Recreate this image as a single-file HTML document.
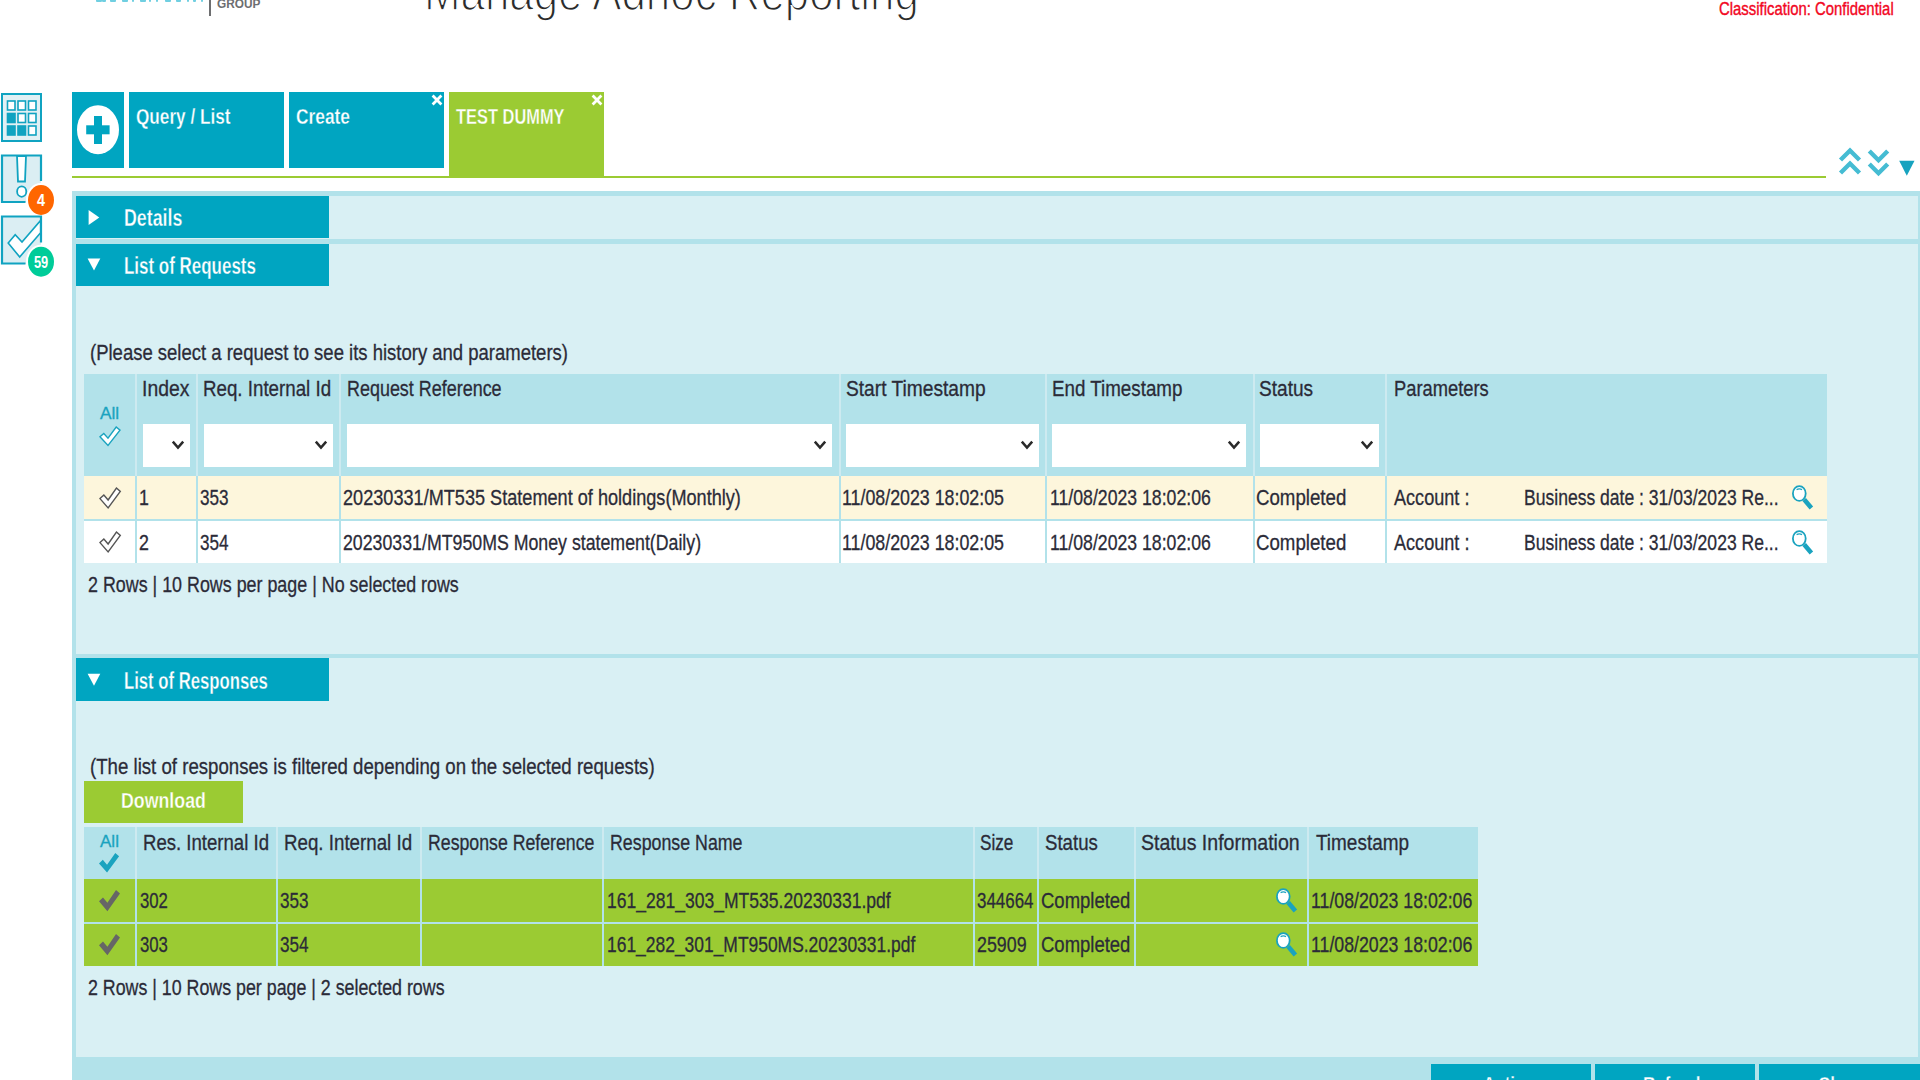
<!DOCTYPE html>
<html><head><meta charset="utf-8"><style>
html,body{margin:0;padding:0;width:1920px;height:1080px;overflow:hidden;background:#fff;position:relative}
body>div,body>svg{position:absolute}
.t{font-family:"Liberation Sans",sans-serif;line-height:1;white-space:pre;transform-origin:0 0}
</style></head><body>
<div style="left:96px;top:0px;width:6px;height:2px;background:#4cc3d9;opacity:0.8;border-radius:0 0 1px 1px"></div>
<div style="left:102px;top:0px;width:4px;height:2px;background:#4cc3d9;opacity:0.8;border-radius:0 0 1px 1px"></div>
<div style="left:110px;top:0px;width:6px;height:2px;background:#4cc3d9;opacity:0.8;border-radius:0 0 1px 1px"></div>
<div style="left:122px;top:0px;width:6px;height:2px;background:#4cc3d9;opacity:0.8;border-radius:0 0 1px 1px"></div>
<div style="left:132px;top:0px;width:2px;height:2px;background:#4cc3d9;opacity:0.8;border-radius:0 0 1px 1px"></div>
<div style="left:140px;top:0px;width:6px;height:2px;background:#4cc3d9;opacity:0.8;border-radius:0 0 1px 1px"></div>
<div style="left:149px;top:0px;width:2px;height:2px;background:#4cc3d9;opacity:0.8;border-radius:0 0 1px 1px"></div>
<div style="left:156px;top:0px;width:2px;height:2px;background:#4cc3d9;opacity:0.8;border-radius:0 0 1px 1px"></div>
<div style="left:165px;top:0px;width:6px;height:2px;background:#4cc3d9;opacity:0.8;border-radius:0 0 1px 1px"></div>
<div style="left:176px;top:0px;width:5px;height:2px;background:#4cc3d9;opacity:0.8;border-radius:0 0 1px 1px"></div>
<div style="left:187px;top:0px;width:2px;height:2px;background:#4cc3d9;opacity:0.8;border-radius:0 0 1px 1px"></div>
<div style="left:193px;top:0px;width:3px;height:2px;background:#4cc3d9;opacity:0.8;border-radius:0 0 1px 1px"></div>
<div style="left:201px;top:0px;width:2px;height:2px;background:#4cc3d9;opacity:0.8;border-radius:0 0 1px 1px"></div>
<div style="left:209px;top:0px;width:2px;height:16px;background:#6d6e70;"></div>
<div style="left:72px;top:92px;width:52px;height:76px;background:#00a5c1;"></div>
<div style="left:129px;top:92px;width:155px;height:76px;background:#00a5c1;"></div>
<div style="left:289px;top:92px;width:155px;height:76px;background:#00a5c1;"></div>
<div style="left:449px;top:92px;width:155px;height:85px;background:#9bcb33;"></div>
<div style="left:72px;top:176px;width:1754px;height:2px;background:#9bcb33;"></div>
<div style="left:72px;top:191px;width:1848px;height:889px;background:#b2e2ea;"></div>
<div style="left:76px;top:196px;width:1842px;height:861px;background:#d9f0f4;"></div>
<div style="left:76px;top:239px;width:1842px;height:5px;background:#b2e2ea;"></div>
<div style="left:76px;top:654px;width:1842px;height:4px;background:#b2e2ea;"></div>
<div style="left:76px;top:196px;width:253px;height:42px;background:#00a5c1;"></div>
<div style="left:76px;top:244px;width:253px;height:42px;background:#00a5c1;"></div>
<div style="left:76px;top:658px;width:253px;height:43px;background:#00a5c1;"></div>
<div style="left:84px;top:374px;width:1743px;height:102px;background:#b2e2ea;"></div>
<div style="left:135px;top:374px;width:2px;height:102px;background:#cdeaf0;"></div>
<div style="left:196px;top:374px;width:2px;height:102px;background:#cdeaf0;"></div>
<div style="left:339px;top:374px;width:2px;height:102px;background:#cdeaf0;"></div>
<div style="left:839px;top:374px;width:2px;height:102px;background:#cdeaf0;"></div>
<div style="left:1045px;top:374px;width:2px;height:102px;background:#cdeaf0;"></div>
<div style="left:1253px;top:374px;width:2px;height:102px;background:#cdeaf0;"></div>
<div style="left:1385px;top:374px;width:2px;height:102px;background:#cdeaf0;"></div>
<div style="left:84px;top:476px;width:1743px;height:43px;background:#fdf6dc;"></div>
<div style="left:84px;top:519px;width:1743px;height:2px;background:#b2e2ea;"></div>
<div style="left:84px;top:521px;width:1743px;height:42px;background:#ffffff;"></div>
<div style="left:135px;top:476px;width:2px;height:87px;background:#b2e2ea;"></div>
<div style="left:196px;top:476px;width:2px;height:87px;background:#b2e2ea;"></div>
<div style="left:339px;top:476px;width:2px;height:87px;background:#b2e2ea;"></div>
<div style="left:839px;top:476px;width:2px;height:87px;background:#b2e2ea;"></div>
<div style="left:1045px;top:476px;width:2px;height:87px;background:#b2e2ea;"></div>
<div style="left:1253px;top:476px;width:2px;height:87px;background:#b2e2ea;"></div>
<div style="left:1385px;top:476px;width:2px;height:87px;background:#b2e2ea;"></div>
<div style="left:143px;top:424px;width:47px;height:43px;background:#fff;"></div>
<div style="left:204px;top:424px;width:129px;height:43px;background:#fff;"></div>
<div style="left:347px;top:424px;width:485px;height:43px;background:#fff;"></div>
<div style="left:846px;top:424px;width:193px;height:43px;background:#fff;"></div>
<div style="left:1052px;top:424px;width:194px;height:43px;background:#fff;"></div>
<div style="left:1260px;top:424px;width:119px;height:43px;background:#fff;"></div>
<div style="left:84px;top:781px;width:159px;height:42px;background:#9bcb33;"></div>
<div style="left:84px;top:827px;width:1394px;height:52px;background:#b2e2ea;"></div>
<div style="left:135px;top:827px;width:2px;height:52px;background:#cdeaf0;"></div>
<div style="left:276px;top:827px;width:2px;height:52px;background:#cdeaf0;"></div>
<div style="left:420px;top:827px;width:2px;height:52px;background:#cdeaf0;"></div>
<div style="left:602px;top:827px;width:2px;height:52px;background:#cdeaf0;"></div>
<div style="left:973px;top:827px;width:2px;height:52px;background:#cdeaf0;"></div>
<div style="left:1037px;top:827px;width:2px;height:52px;background:#cdeaf0;"></div>
<div style="left:1134px;top:827px;width:2px;height:52px;background:#cdeaf0;"></div>
<div style="left:1307px;top:827px;width:2px;height:52px;background:#cdeaf0;"></div>
<div style="left:84px;top:879px;width:1394px;height:43px;background:#9bcb33;"></div>
<div style="left:84px;top:922px;width:1394px;height:2px;background:#b2e2ea;"></div>
<div style="left:84px;top:924px;width:1394px;height:42px;background:#9bcb33;"></div>
<div style="left:135px;top:879px;width:2px;height:87px;background:#b2e2ea;"></div>
<div style="left:276px;top:879px;width:2px;height:87px;background:#b2e2ea;"></div>
<div style="left:420px;top:879px;width:2px;height:87px;background:#b2e2ea;"></div>
<div style="left:602px;top:879px;width:2px;height:87px;background:#b2e2ea;"></div>
<div style="left:973px;top:879px;width:2px;height:87px;background:#b2e2ea;"></div>
<div style="left:1037px;top:879px;width:2px;height:87px;background:#b2e2ea;"></div>
<div style="left:1134px;top:879px;width:2px;height:87px;background:#b2e2ea;"></div>
<div style="left:1307px;top:879px;width:2px;height:87px;background:#b2e2ea;"></div>
<div style="left:1431px;top:1064px;width:160px;height:16px;background:#00a5c1;"></div>
<div style="left:1595px;top:1064px;width:160px;height:16px;background:#00a5c1;"></div>
<div style="left:1759px;top:1064px;width:161px;height:16px;background:#00a5c1;"></div>
<svg style="left:0;top:88px" width="60" height="190" viewBox="0 88 60 190">
<rect x="2" y="94" width="39" height="47" fill="#e1f0f4" stroke="#10a3c1" stroke-width="2"/>
<g stroke="#10a3c1" stroke-width="1.6">
<rect x="7.5" y="101" width="7.5" height="9" fill="#fff"/>
<rect x="18" y="101" width="7.5" height="9" fill="#fff"/>
<rect x="28.5" y="101" width="7.5" height="9" fill="#fff"/>
<rect x="7.5" y="113.5" width="7.5" height="9" fill="#10a3c1"/>
<rect x="18" y="113.5" width="7.5" height="9" fill="#fff"/>
<rect x="28.5" y="113.5" width="7.5" height="9" fill="#fff"/>
<rect x="7.5" y="126" width="7.5" height="9" fill="#10a3c1"/>
<rect x="18" y="126" width="7.5" height="9" fill="#10a3c1"/>
<rect x="28.5" y="126" width="7.5" height="9" fill="#fff"/>
</g>
<rect x="2" y="155" width="39" height="47" fill="#dbeef3"/>
<path d="M25.5 202 H2 V155.5 H41 V181" fill="none" stroke="#10a3c1" stroke-width="2.2"/>
<path d="M17 156 L26 156 L25 181.5 L18 181.5 Z" fill="#fff" stroke="#10a3c1" stroke-width="1.8"/>
<ellipse cx="21.7" cy="191.6" rx="4.6" ry="5.2" fill="#fff" stroke="#10a3c1" stroke-width="1.8"/>
<ellipse cx="41" cy="200" rx="15" ry="17" fill="#fff"/>
<ellipse cx="41" cy="200" rx="13" ry="15" fill="#ff6600"/>
<text x="41" y="206.5" text-anchor="middle" font-family="Liberation Sans" font-weight="bold" font-size="17" fill="#fff" transform="translate(41 0) scale(0.85 1) translate(-41 0)">4</text>
<rect x="2" y="217" width="39" height="47" fill="#dbeef3"/>
<path d="M25.5 263.5 H2 V216.5 H41 V242.5" fill="none" stroke="#10a3c1" stroke-width="2.2"/>
<path d="M8.2 243 L15.2 234.8 L22 242 L40.6 220.5 L40.6 232.7 L19.7 257 Z" fill="#fff" stroke="#10a3c1" stroke-width="1.6"/>
<ellipse cx="41" cy="261.7" rx="15" ry="17" fill="#fff"/>
<ellipse cx="41" cy="261.7" rx="13" ry="15" fill="#00cc99"/>
<text x="41" y="268" text-anchor="middle" font-family="Liberation Sans" font-weight="bold" font-size="16" fill="#fff" transform="translate(41 0) scale(0.8 1) translate(-41 0)">59</text>
</svg>
<svg style="left:72px;top:92px" width="52" height="76" viewBox="72 92 52 76">
<ellipse cx="98" cy="129.7" rx="21" ry="24.5" fill="#fff"/>
<rect x="94" y="116" width="8" height="28" fill="#00a5c1"/>
<rect x="86.2" y="125.3" width="23.4" height="9" fill="#00a5c1"/>
</svg>
<svg style="left:430.5px;top:94px" width="12" height="12" viewBox="0 0 12 12"><path d="M2.6 2.6 L9.4 9.4 M9.4 2.6 L2.6 9.4" stroke="#fff" stroke-width="2.8" stroke-linecap="square"/></svg>
<svg style="left:590.5px;top:94px" width="12" height="12" viewBox="0 0 12 12"><path d="M2.6 2.6 L9.4 9.4 M9.4 2.6 L2.6 9.4" stroke="#fff" stroke-width="2.8" stroke-linecap="square"/></svg>
<svg style="left:1830px;top:140px" width="90" height="45" viewBox="1830 140 90 45">
<g fill="none" stroke="#45bcd3" stroke-width="4.4" stroke-linecap="butt" stroke-linejoin="miter">
<path d="M1840.5 160 L1850 150.5 L1859.5 160"/>
<path d="M1840.5 173 L1850 163.5 L1859.5 173"/>
<path d="M1869.3 151 L1878.5 160.2 L1887.7 151"/>
<path d="M1869.3 164 L1878.5 173.2 L1887.7 164"/>
</g>
<path d="M1899.2 160.7 L1914.5 160.7 L1906.8 175.7 Z" fill="#17a3bf"/>
</svg>
<svg style="left:86px;top:196px" width="16" height="42" viewBox="0 0 16 42"><path d="M2.6 14 L13.3 21.5 L2.6 29 Z" fill="#fff"/></svg>
<svg style="left:86px;top:244px" width="16" height="42" viewBox="0 0 16 42"><path d="M1.6 14.5 L14.3 14.5 L8 26.6 Z" fill="#fff"/></svg>
<svg style="left:86px;top:658px" width="16" height="43" viewBox="0 0 16 43"><path d="M1.6 15.700000000000045 L14.3 15.700000000000045 L8 27.800000000000047 Z" fill="#fff"/></svg>
<svg style="left:171px;top:439px" width="14" height="13" viewBox="0 0 14 13"><path d="M1.8 2.6 L7 8.6 L12.2 2.6" fill="none" stroke="#2a2a2a" stroke-width="2.5"/></svg>
<svg style="left:314px;top:439px" width="14" height="13" viewBox="0 0 14 13"><path d="M1.8 2.6 L7 8.6 L12.2 2.6" fill="none" stroke="#2a2a2a" stroke-width="2.5"/></svg>
<svg style="left:813px;top:439px" width="14" height="13" viewBox="0 0 14 13"><path d="M1.8 2.6 L7 8.6 L12.2 2.6" fill="none" stroke="#2a2a2a" stroke-width="2.5"/></svg>
<svg style="left:1020px;top:439px" width="14" height="13" viewBox="0 0 14 13"><path d="M1.8 2.6 L7 8.6 L12.2 2.6" fill="none" stroke="#2a2a2a" stroke-width="2.5"/></svg>
<svg style="left:1227px;top:439px" width="14" height="13" viewBox="0 0 14 13"><path d="M1.8 2.6 L7 8.6 L12.2 2.6" fill="none" stroke="#2a2a2a" stroke-width="2.5"/></svg>
<svg style="left:1360px;top:439px" width="14" height="13" viewBox="0 0 14 13"><path d="M1.8 2.6 L7 8.6 L12.2 2.6" fill="none" stroke="#2a2a2a" stroke-width="2.5"/></svg>
<svg style="left:97.50px;top:424.50px" width="24" height="22" viewBox="0 0 24 22"><polygon points="2.00,11.80 5.80,8.47 10.00,13.10 18.20,2.00 22.00,5.14 10.00,20.50" fill="#fff" stroke="#1aa3bf" stroke-width="1.4" stroke-linejoin="miter"/></svg>
<svg style="left:97.50px;top:485.50px" width="24" height="24" viewBox="0 0 24 24"><polygon points="2.00,12.60 5.86,9.00 10.12,14.00 18.44,2.00 22.30,5.40 10.12,22.00" fill="#fff" stroke="#555" stroke-width="1.4" stroke-linejoin="miter"/></svg>
<svg style="left:97.50px;top:530.00px" width="24" height="24" viewBox="0 0 24 24"><polygon points="2.00,12.60 5.86,9.00 10.12,14.00 18.44,2.00 22.30,5.40 10.12,22.00" fill="#fff" stroke="#555" stroke-width="1.4" stroke-linejoin="miter"/></svg>
<svg style="left:1789px;top:483px" width="28" height="28" viewBox="0 0 28 28">
<path d="M15.2 16.5 L22.4 24.9" stroke="#1aa3bf" stroke-width="4.6" stroke-linecap="butt"/>
<ellipse cx="10.3" cy="10.5" rx="6.4" ry="7.4" fill="#fff" stroke="#1aa3bf" stroke-width="1.8"/>
<path d="M7.6 6.6 Q10.3 5.2 13 6.6" fill="none" stroke="#1aa3bf" stroke-width="1.3"/>
</svg>
<svg style="left:1789px;top:527.5px" width="28" height="28" viewBox="0 0 28 28">
<path d="M15.2 16.5 L22.4 24.9" stroke="#1aa3bf" stroke-width="4.6" stroke-linecap="butt"/>
<ellipse cx="10.3" cy="10.5" rx="6.4" ry="7.4" fill="#fff" stroke="#1aa3bf" stroke-width="1.8"/>
<path d="M7.6 6.6 Q10.3 5.2 13 6.6" fill="none" stroke="#1aa3bf" stroke-width="1.3"/>
</svg>
<svg style="left:97.40px;top:851.40px" width="24" height="24" viewBox="0 0 24 24"><polygon points="2.00,12.39 5.82,8.86 10.04,13.76 18.28,2.00 22.10,5.33 10.04,21.60" fill="#1aa3bf" /></svg>
<svg style="left:97.00px;top:887.75px" width="25" height="25" viewBox="0 0 25 25"><polygon points="2.00,13.29 5.99,9.45 10.40,14.78 19.01,2.00 23.00,5.62 10.40,23.30" fill="#666" /></svg>
<svg style="left:1273px;top:885.75px" width="28" height="28" viewBox="0 0 28 28">
<path d="M15.2 16.5 L22.4 24.9" stroke="#1aa3bf" stroke-width="4.6" stroke-linecap="butt"/>
<ellipse cx="10.3" cy="10.5" rx="6.4" ry="7.4" fill="#fff" stroke="#1aa3bf" stroke-width="1.8"/>
<path d="M7.6 6.6 Q10.3 5.2 13 6.6" fill="none" stroke="#1aa3bf" stroke-width="1.3"/>
</svg>
<svg style="left:97.00px;top:932.00px" width="25" height="25" viewBox="0 0 25 25"><polygon points="2.00,13.29 5.99,9.45 10.40,14.78 19.01,2.00 23.00,5.62 10.40,23.30" fill="#666" /></svg>
<svg style="left:1273px;top:930px" width="28" height="28" viewBox="0 0 28 28">
<path d="M15.2 16.5 L22.4 24.9" stroke="#1aa3bf" stroke-width="4.6" stroke-linecap="butt"/>
<ellipse cx="10.3" cy="10.5" rx="6.4" ry="7.4" fill="#fff" stroke="#1aa3bf" stroke-width="1.8"/>
<path d="M7.6 6.6 Q10.3 5.2 13 6.6" fill="none" stroke="#1aa3bf" stroke-width="1.3"/>
</svg>
<div class="t" style="left:216.50px;top:-3.01px;font-size:13px;font-weight:bold;color:#6d6e70;transform:scaleX(0.9104);">GROUP</div>
<div class="t" style="left:424.33px;top:-33.93px;font-size:52px;font-weight:normal;color:#2a2a2a;transform:scaleX(0.8433);-webkit-text-stroke:1.6px #fff;">Manage Adhoc Reporting</div>
<div class="t" style="left:1718.75px;top:-0.79px;font-size:19px;font-weight:normal;color:#f2071f;transform:scaleX(0.7840);-webkit-text-stroke:0.4px #f2071f;">Classification: Confidential</div>
<div class="t" style="left:136.00px;top:106.07px;font-size:22px;font-weight:bold;color:#fff;transform:scaleX(0.7806);-webkit-text-stroke:0.35px #00a5c1;">Query / List</div>
<div class="t" style="left:296.00px;top:106.07px;font-size:22px;font-weight:bold;color:#fff;transform:scaleX(0.7876);-webkit-text-stroke:0.35px #00a5c1;">Create</div>
<div class="t" style="left:455.60px;top:106.07px;font-size:22px;font-weight:bold;color:#fff;transform:scaleX(0.7464);-webkit-text-stroke:0.35px #9bcb33;">TEST DUMMY</div>
<div class="t" style="left:123.53px;top:207.23px;font-size:23px;font-weight:bold;color:#fff;transform:scaleX(0.7728);-webkit-text-stroke:0.35px #00a5c1;">Details</div>
<div class="t" style="left:123.56px;top:255.23px;font-size:23px;font-weight:bold;color:#fff;transform:scaleX(0.7373);-webkit-text-stroke:0.35px #00a5c1;">List of Requests</div>
<div class="t" style="left:123.57px;top:670.43px;font-size:23px;font-weight:bold;color:#fff;transform:scaleX(0.7259);-webkit-text-stroke:0.35px #00a5c1;">List of Responses</div>
<div class="t" style="left:89.86px;top:342.07px;font-size:22px;font-weight:normal;color:#2b2b38;transform:scaleX(0.8406);-webkit-text-stroke:0.3px #2b2b38;">(Please select a request to see its history and parameters)</div>
<div class="t" style="left:100.00px;top:406.15px;font-size:16px;font-weight:normal;color:#1aa3bf;transform:scaleX(1.0797);-webkit-text-stroke:0.3px #1aa3bf;">All</div>
<div class="t" style="left:141.64px;top:378.47px;font-size:22px;font-weight:normal;color:#2b2b38;transform:scaleX(0.8800);-webkit-text-stroke:0.3px #2b2b38;">Index</div>
<div class="t" style="left:203.45px;top:378.47px;font-size:22px;font-weight:normal;color:#2b2b38;transform:scaleX(0.8516);-webkit-text-stroke:0.3px #2b2b38;">Req. Internal Id</div>
<div class="t" style="left:346.78px;top:378.47px;font-size:22px;font-weight:normal;color:#2b2b38;transform:scaleX(0.8156);-webkit-text-stroke:0.3px #2b2b38;">Request Reference</div>
<div class="t" style="left:845.93px;top:378.47px;font-size:22px;font-weight:normal;color:#2b2b38;transform:scaleX(0.8718);-webkit-text-stroke:0.3px #2b2b38;">Start Timestamp</div>
<div class="t" style="left:1052.45px;top:378.47px;font-size:22px;font-weight:normal;color:#2b2b38;transform:scaleX(0.8533);-webkit-text-stroke:0.3px #2b2b38;">End Timestamp</div>
<div class="t" style="left:1258.93px;top:378.47px;font-size:22px;font-weight:normal;color:#2b2b38;transform:scaleX(0.8669);-webkit-text-stroke:0.3px #2b2b38;">Status</div>
<div class="t" style="left:1393.57px;top:378.47px;font-size:22px;font-weight:normal;color:#2b2b38;transform:scaleX(0.8331);-webkit-text-stroke:0.3px #2b2b38;">Parameters</div>
<div class="t" style="left:139.09px;top:487.07px;font-size:22px;font-weight:normal;color:#2b2b38;transform:scaleX(0.8100);-webkit-text-stroke:0.3px #2b2b38;">1</div>
<div class="t" style="left:200.00px;top:487.07px;font-size:22px;font-weight:normal;color:#2b2b38;transform:scaleX(0.7787);-webkit-text-stroke:0.3px #2b2b38;">353</div>
<div class="t" style="left:342.68px;top:487.07px;font-size:22px;font-weight:normal;color:#2b2b38;transform:scaleX(0.8237);-webkit-text-stroke:0.3px #2b2b38;">20230331/MT535 Statement of holdings(Monthly)</div>
<div class="t" style="left:842.49px;top:487.07px;font-size:22px;font-weight:normal;color:#2b2b38;transform:scaleX(0.8091);-webkit-text-stroke:0.3px #2b2b38;">11/08/2023 18:02:05</div>
<div class="t" style="left:1049.60px;top:487.07px;font-size:22px;font-weight:normal;color:#2b2b38;transform:scaleX(0.8031);-webkit-text-stroke:0.3px #2b2b38;">11/08/2023 18:02:06</div>
<div class="t" style="left:1255.75px;top:487.07px;font-size:22px;font-weight:normal;color:#2b2b38;transform:scaleX(0.8487);-webkit-text-stroke:0.3px #2b2b38;">Completed</div>
<div class="t" style="left:1393.50px;top:487.07px;font-size:22px;font-weight:normal;color:#2b2b38;transform:scaleX(0.8223);-webkit-text-stroke:0.3px #2b2b38;">Account :</div>
<div class="t" style="left:1524.00px;top:487.07px;font-size:22px;font-weight:normal;color:#2b2b38;transform:scaleX(0.7975);-webkit-text-stroke:0.3px #2b2b38;">Business date : 31/03/2023 Re...</div>
<div class="t" style="left:139.09px;top:531.57px;font-size:22px;font-weight:normal;color:#2b2b38;transform:scaleX(0.8100);-webkit-text-stroke:0.3px #2b2b38;">2</div>
<div class="t" style="left:200.00px;top:531.57px;font-size:22px;font-weight:normal;color:#2b2b38;transform:scaleX(0.7787);-webkit-text-stroke:0.3px #2b2b38;">354</div>
<div class="t" style="left:342.69px;top:531.57px;font-size:22px;font-weight:normal;color:#2b2b38;transform:scaleX(0.8067);-webkit-text-stroke:0.3px #2b2b38;">20230331/MT950MS Money statement(Daily)</div>
<div class="t" style="left:842.49px;top:531.57px;font-size:22px;font-weight:normal;color:#2b2b38;transform:scaleX(0.8091);-webkit-text-stroke:0.3px #2b2b38;">11/08/2023 18:02:05</div>
<div class="t" style="left:1049.60px;top:531.57px;font-size:22px;font-weight:normal;color:#2b2b38;transform:scaleX(0.8031);-webkit-text-stroke:0.3px #2b2b38;">11/08/2023 18:02:06</div>
<div class="t" style="left:1255.75px;top:531.57px;font-size:22px;font-weight:normal;color:#2b2b38;transform:scaleX(0.8487);-webkit-text-stroke:0.3px #2b2b38;">Completed</div>
<div class="t" style="left:1393.50px;top:531.57px;font-size:22px;font-weight:normal;color:#2b2b38;transform:scaleX(0.8223);-webkit-text-stroke:0.3px #2b2b38;">Account :</div>
<div class="t" style="left:1524.00px;top:531.57px;font-size:22px;font-weight:normal;color:#2b2b38;transform:scaleX(0.7975);-webkit-text-stroke:0.3px #2b2b38;">Business date : 31/03/2023 Re...</div>
<div class="t" style="left:87.94px;top:573.87px;font-size:22px;font-weight:normal;color:#2b2b38;transform:scaleX(0.8122);-webkit-text-stroke:0.3px #2b2b38;">2 Rows | 10 Rows per page | No selected rows</div>
<div class="t" style="left:89.85px;top:756.07px;font-size:22px;font-weight:normal;color:#2b2b38;transform:scaleX(0.8471);-webkit-text-stroke:0.3px #2b2b38;">(The list of responses is filtered depending on the selected requests)</div>
<div class="t" style="left:121.49px;top:790.07px;font-size:22px;font-weight:bold;color:#fff;transform:scaleX(0.8075);-webkit-text-stroke:0.35px #9bcb33;">Download</div>
<div class="t" style="left:100.40px;top:833.75px;font-size:16px;font-weight:normal;color:#1aa3bf;transform:scaleX(1.0652);-webkit-text-stroke:0.3px #1aa3bf;">All</div>
<div class="t" style="left:142.66px;top:832.07px;font-size:22px;font-weight:normal;color:#2b2b38;transform:scaleX(0.8445);-webkit-text-stroke:0.3px #2b2b38;">Res. Internal Id</div>
<div class="t" style="left:283.65px;top:832.07px;font-size:22px;font-weight:normal;color:#2b2b38;transform:scaleX(0.8516);-webkit-text-stroke:0.3px #2b2b38;">Req. Internal Id</div>
<div class="t" style="left:427.59px;top:832.07px;font-size:22px;font-weight:normal;color:#2b2b38;transform:scaleX(0.8051);-webkit-text-stroke:0.3px #2b2b38;">Response Reference</div>
<div class="t" style="left:610.49px;top:832.07px;font-size:22px;font-weight:normal;color:#2b2b38;transform:scaleX(0.8086);-webkit-text-stroke:0.3px #2b2b38;">Response Name</div>
<div class="t" style="left:980.22px;top:832.07px;font-size:22px;font-weight:normal;color:#2b2b38;transform:scaleX(0.7796);-webkit-text-stroke:0.3px #2b2b38;">Size</div>
<div class="t" style="left:1044.95px;top:832.07px;font-size:22px;font-weight:normal;color:#2b2b38;transform:scaleX(0.8473);-webkit-text-stroke:0.3px #2b2b38;">Status</div>
<div class="t" style="left:1141.31px;top:832.07px;font-size:22px;font-weight:normal;color:#2b2b38;transform:scaleX(0.8888);-webkit-text-stroke:0.3px #2b2b38;">Status Information</div>
<div class="t" style="left:1315.80px;top:832.07px;font-size:22px;font-weight:normal;color:#2b2b38;transform:scaleX(0.8613);-webkit-text-stroke:0.3px #2b2b38;">Timestamp</div>
<div class="t" style="left:139.75px;top:889.82px;font-size:22px;font-weight:normal;color:#2b2b38;transform:scaleX(0.7609);-webkit-text-stroke:0.3px #2b2b38;">302</div>
<div class="t" style="left:280.40px;top:889.82px;font-size:22px;font-weight:normal;color:#2b2b38;transform:scaleX(0.7787);-webkit-text-stroke:0.3px #2b2b38;">353</div>
<div class="t" style="left:606.50px;top:889.82px;font-size:22px;font-weight:normal;color:#2b2b38;transform:scaleX(0.7969);-webkit-text-stroke:0.3px #2b2b38;">161_281_303_MT535.20230331.pdf</div>
<div class="t" style="left:977.40px;top:889.82px;font-size:22px;font-weight:normal;color:#2b2b38;transform:scaleX(0.7694);-webkit-text-stroke:0.3px #2b2b38;">344664</div>
<div class="t" style="left:1041.26px;top:889.82px;font-size:22px;font-weight:normal;color:#2b2b38;transform:scaleX(0.8401);-webkit-text-stroke:0.3px #2b2b38;">Completed</div>
<div class="t" style="left:1311.29px;top:889.82px;font-size:22px;font-weight:normal;color:#2b2b38;transform:scaleX(0.8056);-webkit-text-stroke:0.3px #2b2b38;">11/08/2023 18:02:06</div>
<div class="t" style="left:139.75px;top:934.07px;font-size:22px;font-weight:normal;color:#2b2b38;transform:scaleX(0.7609);-webkit-text-stroke:0.3px #2b2b38;">303</div>
<div class="t" style="left:280.40px;top:934.07px;font-size:22px;font-weight:normal;color:#2b2b38;transform:scaleX(0.7787);-webkit-text-stroke:0.3px #2b2b38;">354</div>
<div class="t" style="left:606.51px;top:934.07px;font-size:22px;font-weight:normal;color:#2b2b38;transform:scaleX(0.7925);-webkit-text-stroke:0.3px #2b2b38;">161_282_301_MT950MS.20230331.pdf</div>
<div class="t" style="left:976.59px;top:934.07px;font-size:22px;font-weight:normal;color:#2b2b38;transform:scaleX(0.8100);-webkit-text-stroke:0.3px #2b2b38;">25909</div>
<div class="t" style="left:1041.26px;top:934.07px;font-size:22px;font-weight:normal;color:#2b2b38;transform:scaleX(0.8401);-webkit-text-stroke:0.3px #2b2b38;">Completed</div>
<div class="t" style="left:1311.29px;top:934.07px;font-size:22px;font-weight:normal;color:#2b2b38;transform:scaleX(0.8056);-webkit-text-stroke:0.3px #2b2b38;">11/08/2023 18:02:06</div>
<div class="t" style="left:88.49px;top:976.82px;font-size:22px;font-weight:normal;color:#2b2b38;transform:scaleX(0.8091);-webkit-text-stroke:0.3px #2b2b38;">2 Rows | 10 Rows per page | 2 selected rows</div>
<div class="t" style="left:1482.50px;top:1073.57px;font-size:22px;font-weight:bold;color:#fff;transform:scaleX(0.7700);-webkit-text-stroke:0.35px #00a5c1;">Actions</div>
<div class="t" style="left:1643.23px;top:1073.57px;font-size:22px;font-weight:bold;color:#fff;transform:scaleX(0.7700);-webkit-text-stroke:0.35px #00a5c1;">Refresh</div>
<div class="t" style="left:1818.40px;top:1073.57px;font-size:22px;font-weight:bold;color:#fff;transform:scaleX(0.7700);-webkit-text-stroke:0.35px #00a5c1;">Close</div>
</body></html>
